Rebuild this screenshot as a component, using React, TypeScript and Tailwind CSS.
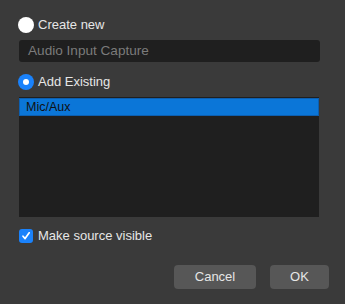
import React from "react";

export default function App() {
  return (
    <div
      className="w-[345px] h-[304px] bg-[#3a3a3a] text-[#e6e6e6] text-[13px] flex flex-col pl-[19px] pr-[25px] pt-[16px]"
      style={{ fontFamily: "'Liberation Sans', Arial, sans-serif" }}
    >
      <div className="flex items-center h-[17px] -ml-[1px]">
        <div className="w-[16px] h-[16px] rounded-full bg-white" />
        <span className="ml-[4px]">Create new</span>
      </div>
      <div className="mt-[7px] h-[22px] w-[301px] bg-[#1f1f1f] rounded-[3px] flex items-center pl-[9px] text-[#7b7b7b] text-[13.6px]">
        Audio Input Capture
      </div>
      <div className="mt-[11px] flex items-center h-[17px] -ml-[1px]">
        <div className="w-[16px] h-[16px] rounded-full bg-[#1a82fb] flex items-center justify-center">
          <div className="w-[6px] h-[6px] rounded-full bg-white" />
        </div>
        <span className="ml-[4px]">Add Existing</span>
      </div>
      <div className="mt-[7px] h-[120px] w-[300px] bg-[#1f1f1f] pt-[1px]">
        <div className="h-[18px] bg-[#0b76d8] border border-[#0d5fb0] text-[#111] text-[12.5px] flex items-center pl-[6px]">
          Mic/Aux
        </div>
      </div>
      <div className="mt-[11px] flex items-center h-[15px]">
        <div className="w-[14px] h-[14px] rounded-[3px] bg-[#1a82fb] flex items-center justify-center">
          <svg width="10" height="10" viewBox="0 0 10 10">
            <path d="M2 5.2 L4.1 7.6 L8.2 1.8" fill="none" stroke="white" strokeWidth="1.7" strokeLinecap="round" strokeLinejoin="round" />
          </svg>
        </div>
        <span className="ml-[5px]">Make source visible</span>
      </div>
      <div className="mt-[22px] flex justify-end gap-[14px] -mr-[9px]">
        <button className="w-[82px] h-[24px] rounded-[4px] bg-[#575757] text-[#e6e6e6]">Cancel</button>
        <button className="w-[59px] h-[24px] rounded-[4px] bg-[#575757] text-[#e6e6e6]">OK</button>
      </div>
    </div>
  );
}
